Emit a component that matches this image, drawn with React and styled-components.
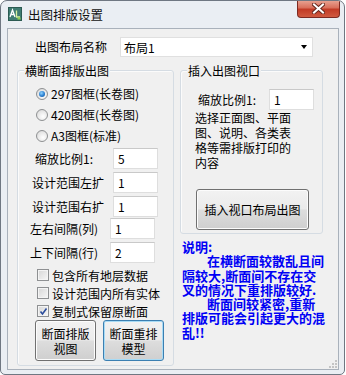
import React from 'react';
import styled, { createGlobalStyle } from 'styled-components';

const GlobalStyle = createGlobalStyle`
  body {
    margin: 0;
    background: #ffffff;
    font-family: "Noto Sans CJK SC", "Noto Sans", sans-serif;
    font-size: 12px;
    color: #000;
  }
  * { box-sizing: border-box; }
`;

const Window = styled.div`
  width: 345px;
  height: 375px;
  border: 1px solid #6f7782;
  border-radius: 7px 7px 5px 5px;
  background: #eaeef3;
  display: flex;
  flex-direction: column;
  overflow: hidden;
`;

const TitleBar = styled.div`
  height: 27px;
  display: flex;
  align-items: flex-start;
  flex-shrink: 0;
`;

const TitleIcon = styled.svg`
  margin: 6px 0 0 7px;
`;

const TitleText = styled.div`
  margin: 5px 0 0 6px;
  font-size: 12.5px;
  line-height: 17px;
  color: #111;
`;

const CloseButton = styled.div`
  margin: -1px 4px 0 auto;
  width: 43px;
  height: 18px;
  border: 1px solid #7d2a21;
  border-top: none;
  border-radius: 0 0 4px 4px;
  background: linear-gradient(#e9a797 0%, #d9705c 45%, #c23b26 55%, #d05a40 100%);
  display: flex;
  align-items: center;
  justify-content: center;
`;

const Client = styled.div`
  flex: 1;
  margin: 0 5px 4px 6px;
  border: 1px solid #a9b1bb;
  background: #f0f0f0;
  position: relative;
`;

const HeaderRow = styled.div`
  display: flex;
  align-items: center;
  padding: 8px 0 0 27px;
`;

const Label = styled.div`
  width: ${(p) => p.$w || 'auto'}px;
  line-height: 16px;
  white-space: nowrap;
`;

const Combo = styled.div`
  width: 193px;
  height: 20px;
  background: #fff;
  border: 1px solid #e0e0e0;
  display: flex;
  align-items: center;
  padding-left: 3px;
`;

const ComboArrow = styled.div`
  margin-left: auto;
  margin-right: 5px;
  width: 0;
  height: 0;
  border-left: 3.5px solid transparent;
  border-right: 3.5px solid transparent;
  border-top: 4px solid #000;
`;

const Columns = styled.div`
  display: flex;
  align-items: flex-start;
  gap: 6px;
  margin-top: 13px;
  padding-left: 9px;
`;

const GroupBox = styled.div`
  position: relative;
  width: ${(p) => p.$w}px;
  border: 1px solid #d5dce3;
  border-radius: 3px;
  box-shadow: inset 1px 1px 0 #fbfbfb;
  padding: ${(p) => p.$pad};
`;

const Caption = styled.span`
  position: absolute;
  top: -8px;
  left: ${(p) => p.$left}px;
  padding: 0 1px;
  line-height: 15px;
  background: #f0f0f0;
  white-space: nowrap;
`;

const OptionRow = styled.div`
  display: flex;
  align-items: center;
  height: ${(p) => p.$h}px;
  padding-left: ${(p) => p.$pl}px;
  gap: 3px;
  white-space: nowrap;
`;

const Radio = styled.span`
  width: 12px;
  height: 12px;
  border-radius: 50%;
  border: 1px solid #8e9092;
  background: radial-gradient(circle at 60% 65%, #ffffff 0%, #e6e6e6 60%, #cfcfcf 100%);
  display: flex;
  align-items: center;
  justify-content: center;
  &::after {
    content: '';
    display: ${(p) => (p.$on ? 'block' : 'none')};
    width: 6px;
    height: 6px;
    border-radius: 50%;
    background: radial-gradient(circle at 40% 35%, #8fd3ff 0%, #2a7fd0 55%, #14508f 100%);
  }
`;

const Check = styled.span`
  width: 12px;
  height: 12px;
  border: 1px solid #8e9092;
  background: linear-gradient(135deg, #d6d6d6 0%, #f7f7f7 100%);
  box-shadow: inset 0 0 0 1px #f4f4f4;
  display: flex;
  align-items: center;
  justify-content: center;
`;

const FieldRow = styled.div`
  display: flex;
  align-items: center;
  height: 21px;
  margin-top: ${(p) => p.$mt || 0}px;
  padding-left: ${(p) => p.$pl}px;
`;

const TextBox = styled.div`
  width: 45px;
  height: 21px;
  background: #fff;
  border: 1px solid #dedede;
  border-top-color: #c9c9c9;
  padding-left: 4px;
  line-height: 19px;
`;

const ButtonRow = styled.div`
  display: flex;
  gap: 7px;
  padding-left: 17px;
`;

const PushButton = styled.div`
  width: ${(p) => p.$w}px;
  height: 41px;
  border: 1px solid ${(p) => (p.$def ? '#3c7fb1' : '#707070')};
  border-radius: 3px;
  background: linear-gradient(#f2f2f2 0%, #ebebeb 48%, #dddddd 52%, #cfcfcf 100%);
  box-shadow: inset 0 0 0 1px ${(p) => (p.$def ? '#a8dbf5' : '#fcfcfc')};
  display: flex;
  align-items: center;
  justify-content: center;
  text-align: center;
  line-height: 15px;
  margin-left: ${(p) => p.$ml || 0}px;
  margin-top: ${(p) => p.$mt || 0}px;
`;

const RightColumn = styled.div`
  width: 143px;
  display: flex;
  flex-direction: column;
`;

const Paragraph = styled.div`
  padding-left: 14px;
  line-height: 15px;
  white-space: nowrap;
`;

const Note = styled.div`
  margin: 6px 0 0 2px;
  color: #0000f5;
  font-weight: bold;
  font-size: 13px;
  line-height: 14.3px;
  white-space: nowrap;
`;

const NoteLine = styled.div`
  padding-left: ${(p) => p.$indent || 0}px;
`;

const Grip = styled.svg`
  position: absolute;
  right: 1px;
  bottom: 1px;
`;

const fields = [
  { label: '缩放比例1:', value: '5', pl: 17, w: 78, mt: 2 },
  { label: '设计范围左扩', value: '1', pl: 14, w: 81, mt: 3 },
  { label: '设计范围右扩', value: '1', pl: 14, w: 81, mt: 3 },
  { label: '左右间隔(列)', value: '1', pl: 12, w: 80, mt: 1 },
  { label: '上下间隔(行)', value: '2', pl: 12, w: 80, mt: 3 },
];

const App = () => {
  return (
    <Window>
      <GlobalStyle />
      <TitleBar>
        <TitleIcon width="14" height="14" viewBox="0 0 14 14">
          <rect x="0.5" y="0.5" width="13" height="13" fill="#3f7c72" stroke="#2b5a52" />
          <path d="M2 10 L4.5 3 L7 10 M3 7.5 H6" stroke="#fff" strokeWidth="1.3" fill="none" />
          <path d="M8.5 3.5 V10 H12" stroke="#d8f0a0" strokeWidth="1.3" fill="none" />
          <rect x="9.5" y="10.5" width="3" height="2" fill="#8fd04a" />
        </TitleIcon>
        <TitleText>出图排版设置</TitleText>
        <CloseButton>
          <svg width="13" height="11" viewBox="0 0 13 11">
            <path d="M2 1.5 L11 9.5 M11 1.5 L2 9.5" stroke="#6a2a20" strokeWidth="4" strokeLinecap="square" />
            <path d="M2 1.5 L11 9.5 M11 1.5 L2 9.5" stroke="#ffffff" strokeWidth="2" strokeLinecap="square" />
          </svg>
        </CloseButton>
      </TitleBar>
      <Client>
        <HeaderRow>
          <Label $w={85}>出图布局名称</Label>
          <Combo>
            布局1
            <ComboArrow />
          </Combo>
        </HeaderRow>
        <Columns>
          <GroupBox $w={157} $pad="12px 0 4px 0">
            <Caption $left={6}>横断面排版出图</Caption>
            <OptionRow $h={21} $pl={18}>
              <Radio $on />
              297图框(长卷图)
            </OptionRow>
            <OptionRow $h={21} $pl={18}>
              <Radio />
              420图框(长卷图)
            </OptionRow>
            <OptionRow $h={21} $pl={18}>
              <Radio />
              A3图框(标准)
            </OptionRow>
            {fields.map((f) => (
              <FieldRow key={f.label} $pl={f.pl} $mt={f.mt}>
                <Label $w={f.w}>{f.label}</Label>
                <TextBox>{f.value}</TextBox>
              </FieldRow>
            ))}
            <div style={{ marginTop: 3 }}>
              <OptionRow $h={18} $pl={19}>
                <Check />
                包含所有地层数据
              </OptionRow>
              <OptionRow $h={18} $pl={19}>
                <Check />
                设计范围内所有实体
              </OptionRow>
              <OptionRow $h={18} $pl={19}>
                <Check>
                  <svg width="9" height="9" viewBox="0 0 9 9">
                    <path d="M1.5 4.5 L3.5 7 L7.5 1.5" stroke="#2a4c9c" strokeWidth="1.6" fill="none" />
                  </svg>
                </Check>
                复制式保留原断面
              </OptionRow>
            </div>
            <ButtonRow>
              <PushButton $w={61}>
                断面排版
                <br />
                视图
              </PushButton>
              <PushButton $w={61} $def>
                断面重排
                <br />
                模型
              </PushButton>
            </ButtonRow>
          </GroupBox>
          <RightColumn>
            <GroupBox $w={143} $pad="18px 0 3px 0">
              <Caption $left={6}>插入出图视口</Caption>
              <FieldRow $pl={17}>
                <Label $w={71}>缩放比例1:</Label>
                <TextBox>1</TextBox>
              </FieldRow>
              <Paragraph>
                选择正面图、平面
                <br />
                图、说明、各类表
                <br />
                格等需排版打印的
                <br />
                内容
              </Paragraph>
              <PushButton $w={113} $ml={15} $mt={19}>
                插入视口布局出图
              </PushButton>
            </GroupBox>
            <Note>
              <NoteLine>说明:</NoteLine>
              <NoteLine $indent={25}>在横断面较散乱且间</NoteLine>
              <NoteLine>隔较大,断面间不存在交</NoteLine>
              <NoteLine>叉的情况下重排版较好.</NoteLine>
              <NoteLine $indent={25}>断面间较紧密,重新</NoteLine>
              <NoteLine>排版可能会引起更大的混</NoteLine>
              <NoteLine>乱!!</NoteLine>
            </Note>
          </RightColumn>
        </Columns>
        <Grip width="8" height="8" viewBox="0 0 8 8">
          {[
            [6, 0], [6, 3], [3, 3], [6, 6], [3, 6], [0, 6],
          ].map(([x, y]) => (
            <rect key={`${x}-${y}`} x={x} y={y} width="2" height="2" fill="#c4c4c4" />
          ))}
        </Grip>
      </Client>
    </Window>
  );
};

export default App;
